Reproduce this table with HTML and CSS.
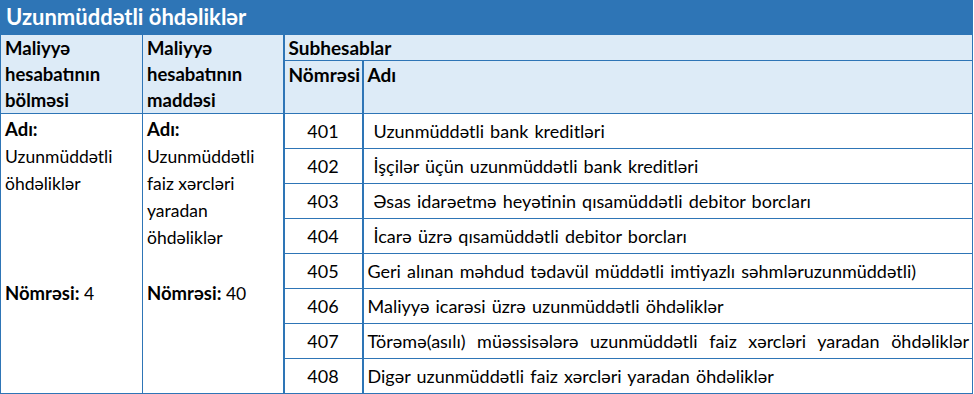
FILE: index.html
```html
<!DOCTYPE html>
<html lang="az">
<head>
<meta charset="utf-8">
<title>Uzunmüddətli öhdəliklər</title>
<link rel="stylesheet" href="styles.css">
</head>
<body>
<div class="sheet">
  <div class="title">Uzunmüddətli öhdəliklər</div>
  <table class="grid">
    <colgroup>
      <col class="c1"><col class="c2"><col class="c3"><col class="c4">
    </colgroup>
    <thead>
      <tr class="h1">
        <th rowspan="2" class="hcell">Maliyyə<br>hesabatının<br>bölməsi</th>
        <th rowspan="2" class="hcell">Maliyyə<br>hesabatının<br>maddəsi</th>
        <th colspan="2" class="hsub">Subhesablar</th>
      </tr>
      <tr class="h2">
        <th class="hnum">Nömrəsi</th>
        <th class="hname">Adı</th>
      </tr>
    </thead>
    <tbody>
      <tr>
        <td rowspan="8" class="info">
          <div class="infobox">
            <div class="lines"><b>Adı:</b><br>Uzunmüddətli<br>öhdəliklər</div>
            <div class="no"><b>Nömrəsi:</b> 4</div>
          </div>
        </td>
        <td rowspan="8" class="info">
          <div class="infobox">
            <div class="lines"><b>Adı:</b><br>Uzunmüddətli<br>faiz xərcləri<br>yaradan<br>öhdəliklər</div>
            <div class="no"><b>Nömrəsi:</b> 40</div>
          </div>
        </td>
        <td class="num">401</td><td class="name ind">Uzunmüddətli bank kreditləri</td>
      </tr>
      <tr><td class="num">402</td><td class="name ind">İşçilər üçün uzunmüddətli bank kreditləri</td></tr>
      <tr><td class="num">403</td><td class="name ind">Əsas idarəetmə heyətinin qısamüddətli debitor borcları</td></tr>
      <tr><td class="num">404</td><td class="name ind">İcarə üzrə qısamüddətli debitor borcları</td></tr>
      <tr><td class="num">405</td><td class="name">Geri alınan məhdud tədavül müddətli imtiyazlı səhmləruzunmüddətli)</td></tr>
      <tr><td class="num">406</td><td class="name">Maliyyə icarəsi üzrə uzunmüddətli öhdəliklər</td></tr>
      <tr><td class="num">407</td><td class="name just">Törəmə(asılı) müəssisələrə uzunmüddətli faiz xərcləri yaradan öhdəliklər</td></tr>
      <tr><td class="num">408</td><td class="name">Digər uzunmüddətli faiz xərcləri yaradan öhdəliklər</td></tr>
    </tbody>
  </table>
</div>
</body>
</html>
```
FILE: styles.css
```css
html, body {
  margin: 0;
  padding: 0;
  background: #ffffff;
}
body {
  font-family: Lato, "Open Sans", "Liberation Sans", sans-serif;
  color: #000;
}
.sheet {
  width: 973px;
}
.title {
  background: #2e75b6;
  color: #ffffff;
  font-weight: 700;
  font-size: 22px;
  height: 34px;
  line-height: 33px;
  padding-left: 6px;
  box-sizing: border-box;
}
.grid {
  width: 973px;
  border-collapse: collapse;
  table-layout: fixed;
  font-size: 18px;
}
.c1 { width: 142px; }
.c2 { width: 141px; }
.c3 { width: 79px; }
.c4 { width: auto; }
.grid th, .grid td {
  border: 1px solid #2e75b6;
  padding: 0 0 0 4px;
  vertical-align: top;
  text-align: left;
}
.grid thead th {
  background: #ddebf7;
  font-weight: 700;
  font-size: 19px;
}
.grid thead th.hcell {
  font-size: 18.5px;
  line-height: 26px;
}
.h1 { height: 26px; }
.h2 { height: 52px; }
.hsub {
  line-height: 25px;
  border-left-width: 2px !important;
}
.hnum, .num, .hname, .name {
  border-left-width: 2px !important;
}
.hnum, .hname {
  line-height: 28px;
}
.grid tbody tr { height: 35px; }
.num {
  text-align: center !important;
  vertical-align: middle !important;
  padding: 0 !important;
}
.name {
  vertical-align: middle !important;
  white-space: nowrap;
  word-spacing: 1.5px;
}
.name.just {
  text-align: justify !important;
  text-align-last: justify;
  white-space: normal;
  padding-right: 3px !important;
}
.ind { padding-left: 10px !important; }
.info {
  font-size: 17.5px;
  line-height: 27px;
  padding-top: 2px !important;
}
.info b { font-size: 18.5px; }
.infobox {
  display: flex;
  flex-direction: column;
}
.info .lines { height: 164px; }
```
